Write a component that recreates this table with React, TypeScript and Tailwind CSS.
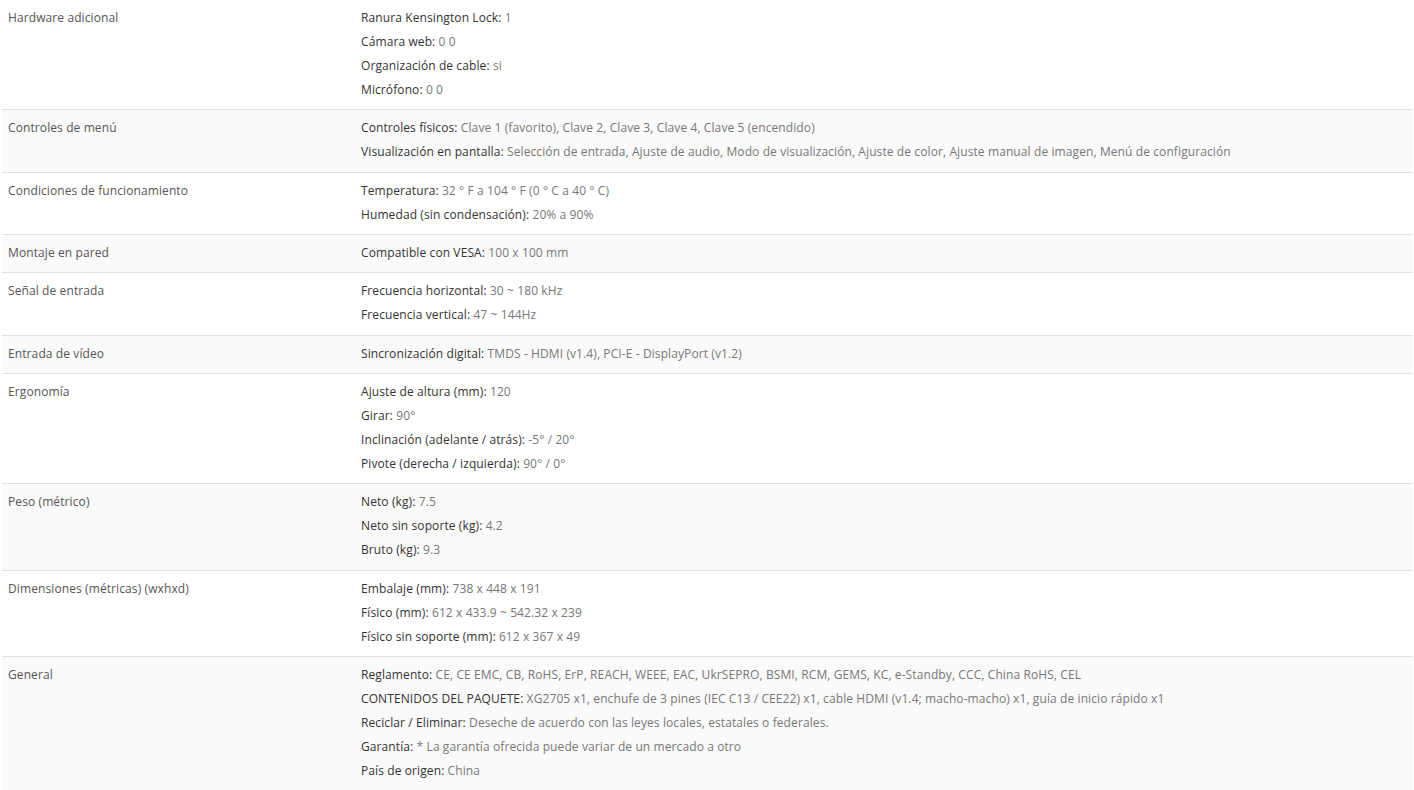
import React from "react";

type Spec = { label: string; items: [string, string][] };

const specs: Spec[] = [
  {
    label: "Hardware adicional",
    items: [
      ["Ranura Kensington Lock", "1"],
      ["Cámara web", "0 0"],
      ["Organización de cable", "si"],
      ["Micrófono", "0 0"],
    ],
  },
  {
    label: "Controles de menú",
    items: [
      ["Controles físicos", "Clave 1 (favorito), Clave 2, Clave 3, Clave 4, Clave 5 (encendido)"],
      [
        "Visualización en pantalla",
        "Selección de entrada, Ajuste de audio, Modo de visualización, Ajuste de color, Ajuste manual de imagen, Menú de configuración",
      ],
    ],
  },
  {
    label: "Condiciones de funcionamiento",
    items: [
      ["Temperatura", "32 ° F a 104 ° F (0 ° C a 40 ° C)"],
      ["Humedad (sin condensación)", "20% a 90%"],
    ],
  },
  { label: "Montaje en pared", items: [["Compatible con VESA", "100 x 100 mm"]] },
  {
    label: "Señal de entrada",
    items: [
      ["Frecuencia horizontal", "30 ~ 180 kHz"],
      ["Frecuencia vertical", "47 ~ 144Hz"],
    ],
  },
  {
    label: "Entrada de vídeo",
    items: [["Sincronización digital", "TMDS - HDMI (v1.4), PCI-E - DisplayPort (v1.2)"]],
  },
  {
    label: "Ergonomía",
    items: [
      ["Ajuste de altura (mm)", "120"],
      ["Girar", "90°"],
      ["Inclinación (adelante / atrás)", "-5° / 20°"],
      ["Pivote (derecha / izquierda)", "90° / 0°"],
    ],
  },
  {
    label: "Peso (métrico)",
    items: [
      ["Neto (kg)", "7.5"],
      ["Neto sin soporte (kg)", "4.2"],
      ["Bruto (kg)", "9.3"],
    ],
  },
  {
    label: "Dimensiones (métricas) (wxhxd)",
    items: [
      ["Embalaje (mm)", "738 x 448 x 191"],
      ["Físico (mm)", "612 x 433.9 ~ 542.32 x 239"],
      ["Físico sin soporte (mm)", "612 x 367 x 49"],
    ],
  },
  {
    label: "General",
    items: [
      [
        "Reglamento",
        "CE, CE EMC, CB, RoHS, ErP, REACH, WEEE, EAC, UkrSEPRO, BSMI, RCM, GEMS, KC, e-Standby, CCC, China RoHS, CEL",
      ],
      [
        "CONTENIDOS DEL PAQUETE",
        "XG2705 x1, enchufe de 3 pines (IEC C13 / CEE22) x1, cable HDMI (v1.4; macho-macho) x1, guía de inicio rápido x1",
      ],
      ["Reciclar / Eliminar", "Deseche de acuerdo con las leyes locales, estatales o federales."],
      ["Garantía", "* La garantía ofrecida puede variar de un mercado a otro"],
      ["País de origen", "China"],
    ],
  },
];

export default function App() {
  return (
    <div className="bg-white min-h-screen overflow-hidden font-['Open_Sans',sans-serif] text-[12px] leading-[24px] tracking-[0.1px]">
      <div className="ml-[2px] mr-[1px]">
        {specs.map((row, i) => (
          <div
            key={row.label}
            className={`flex border-b border-[#e1e1e1] pt-[6px] pb-[7.33px] ${
              i % 2 === 1 ? "bg-[#fafafa]" : "bg-white"
            }`}
          >
            <div className="w-[353px] shrink-0 pl-[6px] text-[#555]">{row.label}</div>
            <div className="flex-1 pl-[6px]">
              {row.items.map(([k, v]) => (
                <div key={k} className="whitespace-nowrap">
                  <span className="text-[#333]">{k}:</span>{" "}
                  <span className="text-[#777]">{v}</span>
                </div>
              ))}
            </div>
          </div>
        ))}
      </div>
    </div>
  );
}
